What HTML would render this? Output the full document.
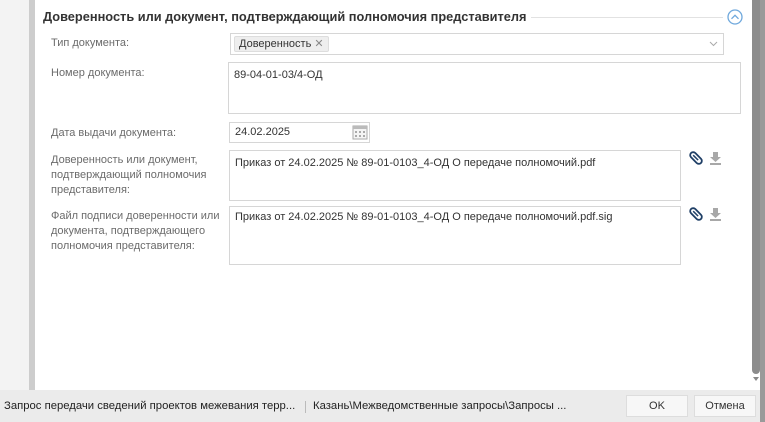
<!DOCTYPE html>
<html><head><meta charset="utf-8"><style>
*{margin:0;padding:0;box-sizing:border-box}
body{width:765px;height:422px;overflow:hidden;background:#fff;font-family:"Liberation Sans",Arial,sans-serif;position:relative;font-size:12px;color:#333}
.a{position:absolute}
.lbl{color:#6b6b6b;font-size:11px;line-height:15px}
.box{border:1px solid #d6d6d6;background:#fff}
.val{font-size:11px;color:#333}
</style></head><body>
<div class="a" style="left:0;top:0;width:29px;height:390px;background:#f3f3f3"></div>
<div class="a" style="left:29px;top:0;width:6px;height:390px;background:#cdcdcd"></div>
<div class="a" style="left:752px;top:0;width:8px;height:374px;background:#8c8c8c;border-radius:0 0 4px 4px"></div>
<div class="a" style="left:753px;top:377px;width:0;height:0;border-left:3px solid transparent;border-right:3px solid transparent;border-top:4px solid #888"></div>
<div class="a" style="left:760px;top:0;width:5px;height:422px;background:#9a9a9a"></div>

<div class="a" style="left:43px;top:9px;font-weight:bold;font-size:12.8px;color:#333">Доверенность или документ, подтверждающий полномочия представителя</div>
<div class="a" style="left:531px;top:17px;width:192px;height:1px;background:#e2e2e2"></div>
<svg class="a" style="left:727px;top:9px" width="16" height="16"><circle cx="8" cy="8" r="7" fill="none" stroke="#6fa8dc" stroke-width="1.3"/><path d="M4.5 9.8 L8 6.3 L11.5 9.8" fill="none" stroke="#6fa8dc" stroke-width="1.3"/></svg>

<div class="a lbl" style="left:51px;top:36px">Тип документа:</div>
<div class="a box" style="left:230px;top:33px;width:494px;height:22px"></div>
<div class="a" style="left:234px;top:36px;width:95px;height:16px;background:#eeeeee;border:1px solid #ddd;border-radius:2px;font-size:11px;padding-left:4px;line-height:14px">Доверенность <span style="color:#888">✕</span></div>
<svg class="a" style="left:709px;top:40px" width="9" height="7"><path d="M1 2 L4.5 5.5 L8 2" fill="none" stroke="#aaa" stroke-width="1"/></svg>

<div class="a lbl" style="left:51px;top:66px">Номер документа:</div>
<div class="a box" style="left:228px;top:62px;width:513px;height:52px"></div>
<div class="a val" style="left:234px;top:69px">89-04-01-03/4-ОД</div>

<div class="a lbl" style="left:51px;top:126px">Дата выдачи документа:</div>
<div class="a box" style="left:229px;top:122px;width:141px;height:21px"></div>
<div class="a val" style="left:235px;top:126px">24.02.2025</div>
<svg class="a" style="left:352px;top:124px" width="16" height="16"><rect x="1" y="2" width="14" height="13" fill="#f5f5f5" stroke="#aaa"/><rect x="1" y="2" width="14" height="3" fill="#bbb"/><g fill="#aaa"><rect x="3" y="7" width="2" height="2"/><rect x="7" y="7" width="2" height="2"/><rect x="11" y="7" width="2" height="2"/><rect x="3" y="11" width="2" height="2"/><rect x="7" y="11" width="2" height="2"/><rect x="11" y="11" width="2" height="2"/></g></svg>

<div class="a lbl" style="left:51px;top:153px">Доверенность или документ,<br>подтверждающий полномочия<br>представителя:</div>
<div class="a box" style="left:229px;top:150px;width:452px;height:51px"></div>
<div class="a val" style="left:235px;top:157px">Приказ от 24.02.2025 № 89-01-0103_4-ОД О передаче полномочий.pdf</div>

<div class="a lbl" style="left:51px;top:209px">Файл подписи доверенности или<br>документа, подтверждающего<br>полномочия представителя:</div>
<div class="a box" style="left:229px;top:206px;width:452px;height:59px"></div>
<div class="a val" style="left:235px;top:211px">Приказ от 24.02.2025 № 89-01-0103_4-ОД О передаче полномочий.pdf.sig</div>

<svg class="a" style="left:688px;top:150px" width="16" height="16"><g transform="rotate(-45 8 8)"><rect x="5" y="1" width="6" height="14" rx="3" fill="none" stroke="#1f3f66" stroke-width="1.8"/><path d="M8 4 V11" stroke="#1f3f66" stroke-width="1.5"/></g></svg>
<svg class="a" style="left:709px;top:151px" width="13" height="14"><path d="M4 1 H9 V6 H12 L6.5 11 L1 6 H4 Z" fill="#a8a8a8"/><rect x="1" y="12" width="11" height="2" fill="#a8a8a8"/></svg>
<svg class="a" style="left:688px;top:206px" width="16" height="16"><g transform="rotate(-45 8 8)"><rect x="5" y="1" width="6" height="14" rx="3" fill="none" stroke="#1f3f66" stroke-width="1.8"/><path d="M8 4 V11" stroke="#1f3f66" stroke-width="1.5"/></g></svg>
<svg class="a" style="left:709px;top:207px" width="13" height="14"><path d="M4 1 H9 V6 H12 L6.5 11 L1 6 H4 Z" fill="#a8a8a8"/><rect x="1" y="12" width="11" height="2" fill="#a8a8a8"/></svg>

<div class="a" style="left:0;top:390px;width:760px;height:32px;background:#ebebeb"></div>
<div class="a" style="left:4px;top:400px;font-size:11.3px;color:#222">Запрос передачи сведений проектов межевания терр...</div>
<div class="a" style="left:305px;top:401px;width:1px;height:12px;background:#bbb"></div>
<div class="a" style="left:313px;top:400px;font-size:11.3px;color:#222">Казань\Межведомственные запросы\Запросы ...</div>
<div class="a" style="left:626px;top:395px;width:62px;height:22px;background:#f7f7f7;border:1px solid #ddd;text-align:center;line-height:20px;font-size:11px">OK</div>
<div class="a" style="left:694px;top:395px;width:62px;height:22px;background:#f7f7f7;border:1px solid #ddd;text-align:center;line-height:20px;font-size:11px">Отмена</div>
</body></html>
